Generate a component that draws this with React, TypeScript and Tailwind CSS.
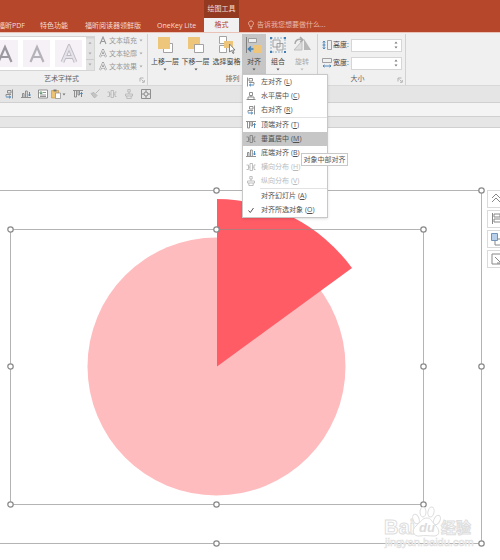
import React from "react";

type AlignKind =
  | "left" | "center" | "right" | "top" | "middle" | "bottom" | "spreadX" | "spreadY" | "check" | "none";

const G = "#858585";
const B = "#3f7fb5";

function AlignIcon({ kind, muted = false }: { kind: AlignKind; muted?: boolean }) {
  const g = muted ? "#b8b8b8" : G;
  const b = muted ? "#b8b8b8" : B;
  return (
    <svg viewBox="0 0 10 10" className="h-2.5 w-2.5 shrink-0" fill="none" stroke={g} strokeWidth="0.9">
      {kind === "left" && (
        <>
          <path d="M1.500 0.500v9M3 1.500h3.500v2.500H3zM3 5.500h5v2" />
          <path d="M8 8H3.500M5 6.700L3.500 8 5 9.300" stroke={b} />
        </>
      )}
      {kind === "center" && <path d="M3.500 1.500h3v3h-3zM5 4.500v1.500M0.500 8.500h9M2 6h6v2.500H2z" />}
      {kind === "right" && (
        <>
          <path d="M8.500 0.500v9M3.500 1.500H7v2.500H3.500zM2 7.500v-2h5" />
          <path d="M2 8h4.500M5 6.700L6.700 8 5 9.300" stroke={b} />
        </>
      )}
      {kind === "top" && (
        <>
          <path d="M0 1.500h10M1.500 2v6h2V2M5 2v4h1.500V2" />
          <path d="M8.500 8V3.500M7.300 5l1.200-1.500L9.700 5" stroke={b} />
        </>
      )}
      {(kind === "middle" || kind === "spreadX") && (
        <path d="M0.500 3h2v4.500h-2M4 1.500h2.500v7H4zM9.500 3H8v4.500h1.500M6.500 5.200H8M2.500 5.200H4" />
      )}
      {kind === "bottom" && (
        <>
          <path d="M0 8.500h10M1.500 8V4.500h1.500V8M4.500 8V2h1.800v6" />
          <path d="M8.500 3v4M7.300 5.500l1.200 1.500 1.200-1.500" stroke={b} />
        </>
      )}
      {kind === "spreadY" && <path d="M3.800 0.500h2.400v2.500H3.800zM5 3v2M1.500 5h7v2h-7zM2.800 7v2.500h4.400V7" />}
      {kind === "check" && <path d="M2.500 5.500l1.800 2 3.200-4.500" stroke="#555" strokeWidth="1" />}
    </svg>
  );
}

function Caret({ className = "text-[#777]" }: { className?: string }) {
  return (
    <svg viewBox="0 0 4 3" className={`h-[3px] w-1 shrink-0 ${className}`} fill="currentColor">
      <path d="M0.500 0.500h3L2 2.500z" />
    </svg>
  );
}

function Launcher() {
  return (
    <button aria-label="更多选项" className="absolute right-0.5 bottom-0.5">
      <svg viewBox="0 0 6 6" className="h-1.5 w-1.5" fill="none" stroke="#999" strokeWidth="0.700">
        <path d="M1 4.500V1h3.500M2.500 2.500l2 2M5.300 3v2.300H3" />
      </svg>
    </button>
  );
}

function BigButton({ label, icon, active = false, muted = false, caret = true, width }: {
  label: string; icon: React.ReactNode; active?: boolean; muted?: boolean; caret?: boolean; width: string;
}) {
  return (
    <button className={`flex h-10 shrink-0 flex-col items-center ${width} ${active ? "bg-[#c6c6c6]" : ""} ${muted ? "text-[#aaa]" : "text-[#444]"}`}>
      <svg viewBox="0 0 18 18" className="mt-0.5 h-[18px] w-[18px] shrink-0" fill="none" stroke="#999" strokeWidth="0.900">{icon}</svg>
      <span className="mt-1 h-2 leading-2 whitespace-nowrap">{label}</span>
      {caret && <span className="mt-0.5 flex"><Caret className={muted ? "text-[#bbb]" : "text-[#555]"} /></span>}
    </button>
  );
}

function SizeField({ id, label, vertical = false }: { id: string; label: string; vertical?: boolean }) {
  return (
    <div className="flex h-[14px] items-center">
      <svg viewBox="0 0 10 10" className="h-2.5 w-2.5 shrink-0" fill="none" stroke="#999" strokeWidth="0.900">
        {vertical ? (
          <>
            <path d="M5.500 0.500h4v9h-4z" />
            <path d="M2 1.500v7M0.800 2.500L2 1l1.200 1.500M0.800 7.500L2 9l1.200-1.500M0.500 5h3" stroke={B} />
          </>
        ) : (
          <>
            <path d="M0.500 0.500h9v4h-9z" />
            <path d="M1 8h8M2.500 6.800L1 8l1.500 1.200M7.500 6.800L9 8 7.500 9.200" stroke={B} />
          </>
        )}
      </svg>
      <label htmlFor={id} className="ml-px w-[18px] leading-2 whitespace-nowrap text-[#444]">{label}</label>
      <span className="flex h-[13px] w-[51px] border border-[#d6d6d6] bg-white">
        <input id={id} className="w-full min-w-0 bg-transparent outline-none" />
        <span className="flex w-2 shrink-0 flex-col items-center justify-center gap-0.5 pr-0.5">
          <button aria-label="增加" className="flex rotate-180"><Caret /></button>
          <button aria-label="减少" className="flex"><Caret /></button>
        </span>
      </span>
    </div>
  );
}

const menu: { text: string; k: string; icon: AlignKind; off?: boolean; on?: boolean; line?: boolean }[] = [
  { text: "左对齐", k: "L", icon: "left" },
  { text: "水平居中", k: "C", icon: "center" },
  { text: "右对齐", k: "R", icon: "right", line: true },
  { text: "顶端对齐", k: "T", icon: "top" },
  { text: "垂直居中", k: "M", icon: "middle", on: true },
  { text: "底端对齐", k: "B", icon: "bottom" },
  { text: "横向分布", k: "H", icon: "spreadX", off: true },
  { text: "纵向分布", k: "V", icon: "spreadY", off: true, line: true },
  { text: "对齐幻灯片", k: "A", icon: "none" },
  { text: "对齐所选对象", k: "O", icon: "check" },
];

function AlignMenu() {
  return (
    <div className="absolute top-10 left-0 z-10 w-[86px] border border-[#c8c8c8] bg-white shadow-sm" role="menu">
      {menu.map((m) => (
        <React.Fragment key={m.k}>
          <button
            role="menuitem"
            disabled={m.off}
            className={`flex h-[14px] w-full items-center pl-[3px] text-left whitespace-nowrap ${m.on ? "bg-[#c6c6c6]" : ""} ${m.off ? "text-[#bbb]" : "text-[#505050]"}`}
          >
            <AlignIcon kind={m.icon} muted={m.off} />
            <span className="ml-[5px]">{m.text}</span>
            <span className="ml-0.5">(<u>{m.k}</u>)</span>
          </button>
          {m.line && <div className="ml-[17px] h-px bg-[#e2e2e2]" />}
        </React.Fragment>
      ))}
      <div role="tooltip" className="absolute top-[78px] left-[58px] flex h-[13px] w-[47px] items-center justify-center border border-[#c9c9c9] bg-white whitespace-nowrap text-[#555]">
        对象中部对齐
      </div>
    </div>
  );
}

function TextEffect({ label, fill }: { label: string; fill: string }) {
  return (
    <button className="flex h-[13px] items-center text-[#999]">
      <svg viewBox="0 0 8 9" className="h-[9px] w-2">
        <path d="M1 8L4 1l3 7M2.200 5.500h3.600" fill="none" stroke="#999" strokeWidth={fill === "solid" ? 1.1 : 2} />
        {fill !== "solid" && <path d="M1 8L4 1l3 7M2.200 5.500h3.600" fill="none" stroke="#eee" strokeWidth="0.900" />}
      </svg>
      <span className="ml-0.5">{label}</span>
      <span className="ml-0.5"><Caret className="text-[#aaa]" /></span>
    </button>
  );
}

function StyleTile({ color, hollow = false }: { color: string; hollow?: boolean }) {
  return (
    <button aria-label="艺术字" className="flex h-[27px] w-[27px] shrink-0 items-center justify-center bg-[#f5f1f7]">
      <svg viewBox="0 0 20 20" className="h-5 w-5" fill="none">
        <path d="M3.500 18L10 3l6.500 15M5.500 13h9" stroke={color} strokeWidth={hollow ? 3.800 : 2.200} />
        {hollow && <path d="M3.500 18L10 3l6.500 15M5.500 13h9" stroke="#e6e2ea" strokeWidth="2" />}
      </svg>
    </button>
  );
}

function Quick({ children }: { children: React.ReactNode }) {
  return <button aria-label="快速工具" className="flex w-[17px] shrink-0 items-center justify-center">{children}</button>;
}

const groupLabel = "absolute inset-x-0 bottom-0.5 text-center leading-2 text-[#666]";
const wedge = "M217 71V238.500L352 140A167.500 167.500 0 0 0 217 71Z";
const handles: [number, number][] = [
  [216, 62], [481, 62], [481, 238], [481, 415], [216, 415],
  [10, 101], [216, 101], [423, 101], [10, 238], [423, 238], [10, 376], [216, 376], [423, 376],
];

function Slide() {
  return (
    <svg viewBox="0 0 500 432" className="absolute top-0 left-0 h-[432px] w-[500px]" aria-label="饼图">
      <circle cx="216.500" cy="238.500" r="129" fill="#ffbcbf" />
      <path d={wedge} fill="#ff5c66" />
      <g fill="none" stroke="#8c8c8c" strokeOpacity="0.650">
        <path d="M0 62.500H481.500V415.500H0" />
        <path d="M10.500 101.500H423.500V376.500H10.500z" />
      </g>
      <g fill="#fff" stroke="#888" strokeWidth="1.200">
        {handles.map(([x, y]) => <circle key={`${x}-${y}`} cx={x + 0.5} cy={y + 0.5} r="2.700" />)}
      </g>
      <g fill="#fff" stroke="#dedede" strokeWidth="1" className="font-['Liberation_Sans','Noto_Sans_CJK_SC',sans-serif]">
        <text x="384" y="406" fontSize="20" fontWeight="bold">Bai</text>
        <ellipse cx="416" cy="391" rx="3" ry="5" transform="rotate(-20 416 391)" />
        <ellipse cx="423" cy="384" rx="3" ry="5" />
        <ellipse cx="431" cy="384" rx="3" ry="5" transform="rotate(12 431 384)" />
        <ellipse cx="437" cy="392" rx="3" ry="5" transform="rotate(25 437 392)" />
        <path d="M427 390c4 0 5 4 9 8s4 10-2 10c-4 0-10-1-14 0-7 1-9-6-4-10s6-8 11-8z" />
        <text x="419" y="404" fontSize="13" fontWeight="bold" fontStyle="italic" fill="#dcdcdc" stroke="none">du</text>
        <text x="441" y="405" fontSize="15" fontWeight="bold">经验</text>
        <text x="385" y="418" fontSize="11" fill="#f4f4f4" stroke="#dedede" strokeWidth="0.500">jingyan.baidu.com</text>
      </g>
    </svg>
  );
}

export default function App() {
  const tab = "h-3 shrink-0 whitespace-nowrap";
  return (
    <div className="min-h-[560px] overflow-hidden bg-white font-['Open_Sans','Noto_Sans_CJK_SC',sans-serif] text-[7px] leading-[10px]">
      <header className="flex h-8 items-end overflow-hidden bg-[#b7472a] text-[#f6dcd4]">
        <nav className="flex h-full items-end">
          <button className={`${tab} -ml-0.5 w-[42px] text-left`}>福昕PDF</button>
          <button className={`${tab} w-[45px] text-left`}>特色功能</button>
          <button className={`${tab} w-[72px] text-left`}>福昕阅读器领鲜版</button>
          <button className={`${tab} w-[47px] text-left`}>OneKey Lite</button>
          <div className="flex h-full w-[35px] shrink-0 flex-col text-center">
            <div className="flex h-[18px] items-center justify-center bg-[#93391f] whitespace-nowrap">绘图工具</div>
            <button className="h-3.5 bg-[#f1f1f1] text-[#b7472a]">格式</button>
          </div>
        </nav>
        <button className={`${tab} ml-2 flex items-start text-[#eab9a9]`}>
          <svg viewBox="0 0 8 10" className="mr-0.5 h-2.5 w-2" fill="none" stroke="currentColor" strokeWidth="0.900">
            <path d="M3 7V5.800C0.500 4 1.500 1 4 1s3.500 3 1 4.800V7zM3 8.700h2" />
          </svg>
          告诉我您想要做什么...
        </button>
      </header>

      <section className="flex h-[54px] border-t border-b border-t-[#e9c3b8] border-b-[#d8d8d8] bg-[#f0f0f0] pt-px" aria-label="格式">
        <div className="relative flex w-[148px] shrink-0 border-r border-[#d2d2d2]">
          <div className="mt-0.5 flex h-[35px] w-[95px] shrink-0 items-center justify-end border border-l-0 border-[#d5d5d5] bg-white">
            <div className="flex min-w-0 flex-1 justify-end gap-[5px] overflow-hidden">
              <StyleTile color="#9b98a0" />
              <StyleTile color="#b5b2b9" />
              <StyleTile color="#bdbac2" hollow />
            </div>
            <div className="ml-1 flex h-full w-2 shrink-0 flex-col divide-y divide-[#ccc] bg-[#e3e3e3]">
              <button aria-label="向上" className="flex flex-1 rotate-180 items-center justify-center"><Caret className="text-[#aaa]" /></button>
              <button aria-label="向下" className="flex flex-1 items-center justify-center"><Caret className="text-[#aaa]" /></button>
              <button aria-label="其他" className="flex flex-1 items-center justify-center"><Caret className="text-[#aaa]" /></button>
            </div>
          </div>
          <div className="ml-1 flex flex-col">
            <TextEffect label="文本填充" fill="solid" />
            <TextEffect label="文本轮廓" fill="outline" />
            <TextEffect label="文本效果" fill="effect" />
          </div>
          <span className="absolute bottom-0.5 left-11 leading-2 text-[#666]">艺术字样式</span>
          <Launcher />
        </div>

        <div className="relative flex w-[170px] shrink-0 border-r border-[#d2d2d2]">
          <BigButton label="上移一层" width="ml-0.5 w-[30px]" icon={<><path d="M7.500 7.500h9v9h-9z" fill="#fff" /><path d="M2 1h12v12H2z" fill="#edc67c" stroke="none" /></>} />
          <BigButton label="下移一层" width="w-[31px]" icon={<><path d="M1 1h12v12H1z" fill="#edc67c" stroke="none" /><path d="M7.500 8.500h9v8h-9z" fill="#fff" /></>} />
          <BigButton label="选择窗格" width="w-[31px]" caret={false} icon={<><path d="M1.500 0.500h7v7h-7zM1.500 9.500h7v7h-7z" fill="#fff" /><path d="M6 5h9v7H6z" fill="#edc67c" stroke="none" /><path d="M11.500 8v8l2-1.500 1.500 3 1-.500-1.300-3H17z" fill="#fff" stroke="#777" /></>} />
          <div className="relative">
            <BigButton label="对齐" width="w-6" active icon={<><path d="M1.500 1v16" stroke="#777" /><path d="M3.500 2.500h8v4h-8z" fill="#eee" /><path d="M9 9h8v8H9z" fill="#edc67c" stroke="none" /><path d="M8.500 13H4M6 10.500L3.500 13 6 15.500" stroke={B} strokeWidth="1.600" /></>} />
            <AlignMenu />
          </div>
          <BigButton label="组合" width="w-6" icon={<><path d="M2 2h14v14H2z" stroke="#8aa9c5" strokeDasharray="2 1" /><path d="M4 4h7v7H4zM8 7.500h6V14H8z" /><g fill={B} stroke="none"><path d="M1 1h2v2H1zM15 1h2v2h-2zM1 15h2v2H1zM15 15h2v2h-2z" /></g></>} />
          <BigButton label="旋转" width="w-6" muted icon={<><path d="M1 14h8V5z" fill="#ddd" stroke="#bbb" /><path d="M11 3v11h7z" fill="#b8b8b8" stroke="none" /><path d="M2 8c0-4 4-6 7-4M7 1l3 3-3 2" stroke="#aaa" strokeWidth="1.500" /></>} />
          <span className={groupLabel}>排列</span>
        </div>

        <div className="relative flex w-[88px] shrink-0 flex-col gap-1 border-r border-[#d2d2d2] pt-1 pl-1">
          <SizeField id="h" label="高度:" vertical />
          <SizeField id="w" label="宽度:" />
          <span className={`${groupLabel} pr-2`}>大小</span>
          <Launcher />
        </div>
      </section>

      <div className="flex h-[17px] items-center border-b border-[#d0d0d0] bg-[#e5e5e5]" role="toolbar">
        <Quick><AlignIcon kind="right" /></Quick>
        <Quick><AlignIcon kind="bottom" /></Quick>
        <Quick>
          <svg viewBox="0 0 10 10" className="h-2.5 w-2.5" fill="#fff" stroke={G} strokeWidth="0.900"><path d="M0.500 1h9v8h-9zM2 6h6M2 7.500h6M5 3.500h3" /><path d="M2 3h2v1.500H2z" stroke="#599267" /></svg>
        </Quick>
        <button aria-label="粘贴" className="flex w-[18px] items-center">
          <svg viewBox="0 0 10 10" className="mr-px h-2.5 w-2.5"><path d="M0.500 1.500h7V9h-7z" fill="#edc272" stroke="#c69b4c" strokeWidth="0.700" /><path d="M2.500 0.500h3v2h-3z" fill="#777" /><path d="M4.500 4h5v5.500h-5z" fill="#fff" stroke="#888" strokeWidth="0.700" /></svg>
          <Caret />
        </button>
        <Quick><AlignIcon kind="top" /></Quick>
        <Quick>
          <svg viewBox="0 0 10 10" className="h-2.5 w-2.5" fill="none" stroke="#b8b8b8"><path d="M9.500 0.500L6 4M1 4.500l3-1 3 3L4.500 9z" fill="#c4c4c4" /></svg>
        </Quick>
        <Quick><AlignIcon kind="spreadX" muted /></Quick>
        <Quick><AlignIcon kind="spreadY" muted /></Quick>
        <Quick>
          <svg viewBox="0 0 10 10" className="h-2.5 w-2.5" fill="none" stroke={G} strokeWidth="0.900"><path d="M0.500 0.500h9v9h-9z" /><circle cx="5" cy="5" r="2" /><path d="M5 1v2M5 7v2M1 5h2M7 5h2" /></svg>
        </Quick>
      </div>
      <div className="h-[13px] bg-[#f4f4f4]" />
      <div className="h-3 border-y border-[#d0d0d0] bg-[#e6e6e6]" />

      <main className="relative flex h-[432px] justify-end overflow-hidden bg-white">
        <Slide />
        <div className="relative mt-[62px] -mr-1.5 flex w-[19px] flex-col gap-0.5">
          {[
            <path key="a" d="M4 8l4-4 4 4M4 12l4-4 4 4" />,
            <path key="b" d="M4.500 3v11M6 4h6v3H6zM6 9h8v3H6z" />,
            <g key="c"><path d="M7 9h7v6H7z" fill="#fff" /><path d="M3.500 3.500h6v7h-6z" fill="#b9d0ea" stroke="#7294b8" /></g>,
            <path key="d" d="M13 4H4v10h10M7 7l6 6M13 9v4H9" />,
          ].map((icon, i) => (
            <button key={i} aria-label="对象工具" className="flex h-[18px] w-full items-center border border-[#dadada] bg-white">
              <svg viewBox="0 0 18 18" className="h-[18px] w-[18px] shrink-0" fill="none" stroke="#888">{icon}</svg>
            </button>
          ))}
        </div>
      </main>
    </div>
  );
}
